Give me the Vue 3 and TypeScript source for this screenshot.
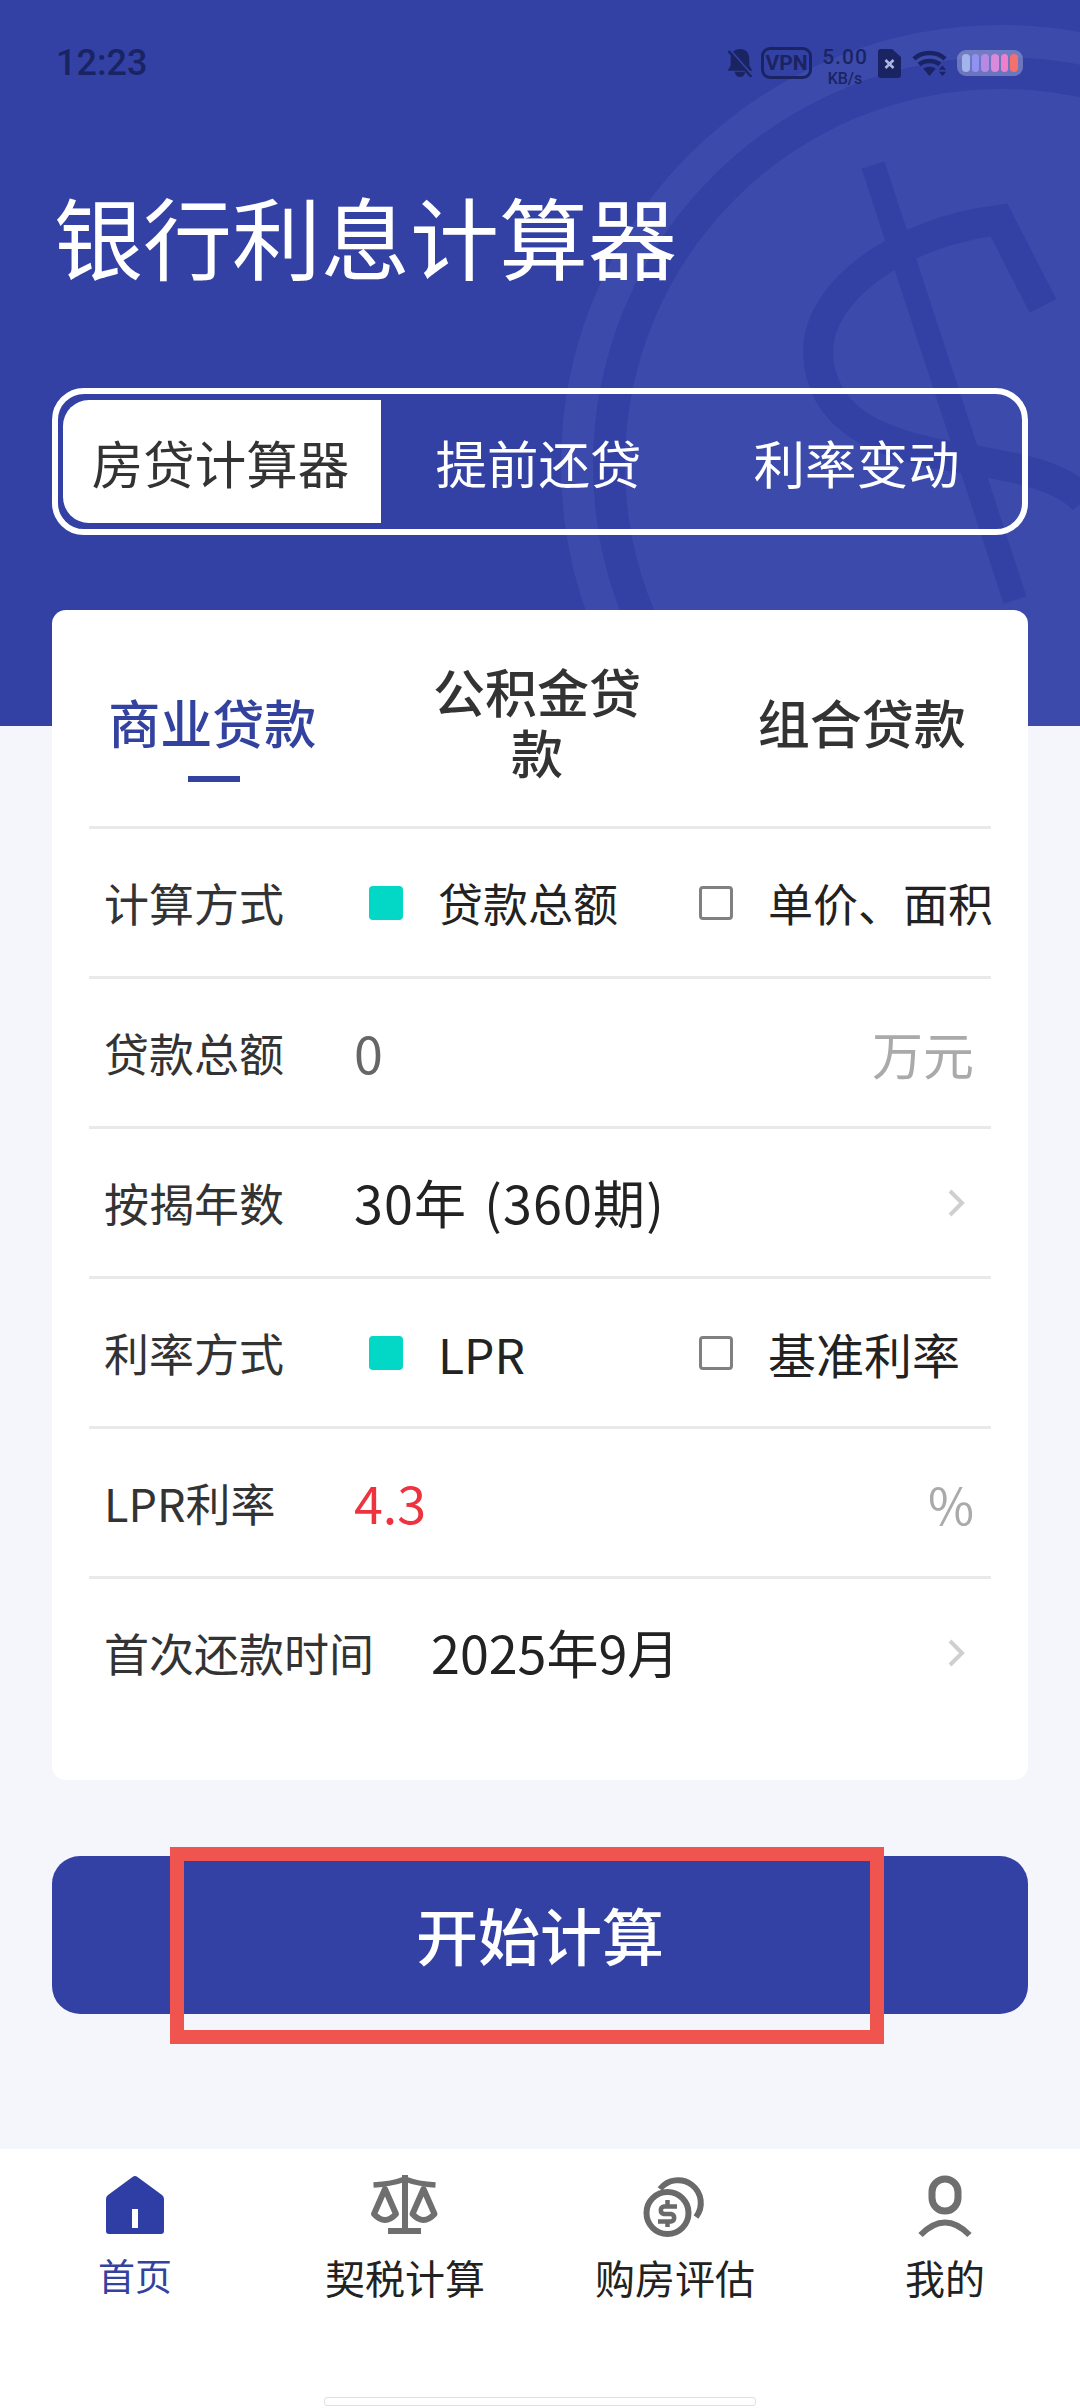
<script setup lang="ts">
import { ref } from 'vue'

const topTabs = ['房贷计算器', '提前还贷', '利率变动']
const loanTabs = ['商业贷款', '公积金贷款', '组合贷款']
const navItems = [
  { key: 'home', label: '首页' },
  { key: 'scale', label: '契税计算' },
  { key: 'coin', label: '购房评估' },
  { key: 'user', label: '我的' },
]
const batteryBars = ['#a3b4ec', '#9092f2', '#b68ae4', '#d98adb', '#ee7fca', '#f3706f']

const activeTop = ref(0)
const activeLoan = ref(0)
const activeNav = ref(0)
const calcMode = ref(0)
const rateMode = ref(0)
</script>

<template>
  <div class="page">
    <section class="hero">
      <svg class="hero-bg" width="1080" height="726" viewBox="0 0 1080 726" fill="none">
        <circle cx="1001" cy="465" r="424" stroke="#3c4bab" stroke-width="32" />
        <circle cx="1001" cy="465" r="376" fill="#3c4bab" />
        <path d="M873 165 L1015 600" stroke="#3341a5" stroke-width="24" />
        <path
          d="M1043 306 L999 220 C900 232 818 290 818 352 C820 420 880 444 950 456 C1010 466 1060 474 1084 500"
          stroke="#3341a5"
          stroke-width="30"
        />
      </svg>

      <div class="status">
        <span class="time">12:23</span>
        <div class="status-icons">
          <svg class="bell" width="26" height="28" viewBox="0 0 24 27">
            <path d="M12 0c6 0 9 4 9 10v6l3 5H0l3-5v-6c0-6 3-10 9-10zM7 22h10a5 5 0 0 1-10 0z" fill="#1b2462" />
            <path d="M1 0l22 25" stroke="#3341a5" stroke-width="3" />
            <path d="M1 2l22 25" stroke="#1b2462" stroke-width="2.500" />
          </svg>
          <span class="vpn">VPN</span>
          <span class="speed"><b>5.00</b><i>KB/s</i></span>
          <svg class="sim" width="23" height="29" viewBox="0 0 23 29">
            <path d="M3 0h11l9 8v18a3 3 0 0 1-3 3H3a3 3 0 0 1-3-3V3a3 3 0 0 1 3-3z" fill="#1b2462" />
            <path d="M7.500 11l8 8M15.500 11l-8 8" stroke="#aeb6e0" stroke-width="2.600" />
          </svg>
          <svg class="wifi" width="35" height="26" viewBox="0 0 33 25" fill="none">
            <path d="M1.500 8.500C9.500 1 23.500 1 31.500 8.500" stroke="#1b2462" stroke-width="4.400" />
            <path d="M6.500 14C12 9.500 21 9.500 26.500 14" stroke="#1b2462" stroke-width="4.400" />
            <path d="M10.500 18c3-2.500 9-2.500 12 0l-6 7z" fill="#1b2462" />
            <path d="M29 15l3.500 4h-7zM29 25l3.500-4h-7z" fill="#1b2462" />
          </svg>
          <div class="battery">
            <i v-for="c in batteryBars" :key="c" :style="{ background: c }" />
          </div>
        </div>
      </div>

      <h1 class="title">银行利息计算器</h1>

      <div class="seg">
        <button
          v-for="(t, i) in topTabs"
          :key="t"
          class="seg-item"
          :class="{ on: activeTop === i }"
          @click="activeTop = i"
        >
          {{ t }}
        </button>
      </div>
    </section>

    <main class="main">
      <section class="card">
        <div class="loan-tabs">
          <button
            v-for="(t, i) in loanTabs"
            :key="t"
            class="loan-tab"
            :class="{ on: activeLoan === i }"
            @click="activeLoan = i"
          >
            <span class="loan-text">{{ t }}</span>
            <i v-if="activeLoan === i" class="loan-bar" />
          </button>
        </div>

        <div class="row">
          <span class="label">计算方式</span>
          <div class="options">
            <label class="option" @click="calcMode = 0">
              <i class="check" :class="{ on: calcMode === 0 }" />贷款总额
            </label>
            <label class="option" @click="calcMode = 1">
              <i class="check" :class="{ on: calcMode === 1 }" />单价、面积
            </label>
          </div>
        </div>

        <div class="row">
          <span class="label">贷款总额</span>
          <span class="value muted">0</span>
          <span class="unit">万元</span>
        </div>

        <div class="row">
          <span class="label">按揭年数</span>
          <span class="value years">30年 (360期)</span>
          <svg class="chevron" width="17" height="28" viewBox="0 0 17 28" fill="none">
            <path d="M2 2l12 12L2 26" stroke="#cfcfcf" stroke-width="4" />
          </svg>
        </div>

        <div class="row">
          <span class="label">利率方式</span>
          <div class="options rate">
            <label class="option" @click="rateMode = 0">
              <i class="check" :class="{ on: rateMode === 0 }" />LPR
            </label>
            <label class="option" @click="rateMode = 1">
              <i class="check" :class="{ on: rateMode === 1 }" />基准利率
            </label>
          </div>
        </div>

        <div class="row">
          <span class="label">LPR利率</span>
          <span class="value red">4.3</span>
          <span class="unit percent">%</span>
        </div>

        <div class="row">
          <span class="label">首次还款时间</span>
          <span class="value">2025年9月</span>
          <svg class="chevron" width="17" height="28" viewBox="0 0 17 28" fill="none">
            <path d="M2 2l12 12L2 26" stroke="#cfcfcf" stroke-width="4" />
          </svg>
        </div>
      </section>

      <div class="action">
        <button class="start">开始计算</button>
        <div class="mark" />
      </div>
    </main>

    <nav class="nav">
      <div class="nav-items">
        <button
          v-for="(n, i) in navItems"
          :key="n.key"
          class="nav-item"
          :class="{ on: activeNav === i }"
          @click="activeNav = i"
        >
          <svg width="70" height="70" viewBox="0 0 70 70" fill="none">
            <template v-if="n.key === 'home'">
              <path
                d="M32.500 7 L8 25 Q6 26.500 6 29 V61 Q6 64 9 64 H61 Q64 64 64 61 V29 Q64 26.500 62 25 L37.500 7 Q35 5 32.500 7z"
                fill="#2f3ea5"
              />
              <rect x="32" y="39" width="6" height="19" fill="#fff" />
            </template>
            <template v-else-if="n.key === 'scale'">
              <g stroke="#6f6f6f" stroke-width="6">
                <path d="M35 5V59M18 61H51" />
                <path d="M3.500 15Q22 14 35 9Q48 14 65.500 15" stroke-width="5.500" />
                <path d="M15 19L4 44Q15 56 26 44z" stroke-linejoin="round" />
                <path d="M53.500 19L42.500 44Q53.500 56 64.500 44z" stroke-linejoin="round" />
              </g>
            </template>
            <template v-else-if="n.key === 'coin'">
              <g stroke="#6a6a6a" stroke-width="6">
                <circle cx="27.500" cy="43" r="21" />
                <path d="M20 19A22.500 22.500 0 1 1 56 47" />
                <path
                  d="M37 36.500H24a3.800 3.800 0 0 0 0 7.500h7a3.800 3.800 0 0 1 0 7.500H18M27.500 30V36M27.500 52V57"
                  stroke-width="4.500"
                />
              </g>
            </template>
            <template v-else>
              <g stroke="#6f6f6f">
                <rect x="22" y="9" width="26" height="32" rx="13" stroke-width="7" />
                <path d="M10.500 65Q35 40 59.500 65" stroke-width="6" />
              </g>
            </template>
          </svg>
          <span class="nav-label">{{ n.label }}</span>
        </button>
      </div>
      <i class="home-bar" />
    </nav>
  </div>
</template>

<style>
html,
body {
  margin: 0;
  background: #f4f6fb;
}
</style>

<style scoped>
.page {
  width: 1080px;
  height: 2408px;
  display: flex;
  flex-direction: column;
  overflow: hidden;
  background: #f4f6fb;
  font-family: "Noto Sans CJK SC", "Noto Sans", sans-serif;
  color: #333;
}

button {
  border: 0;
  padding: 0;
  background: none;
  font: inherit;
  color: inherit;
}

.hero {
  position: relative;
  flex: none;
  height: 726px;
  background: #3341a5;
  overflow: hidden;
}

.hero-bg {
  position: absolute;
  left: 0;
  top: 0;
}

.status {
  position: relative;
  height: 46px;
  padding: 40px 57px 0 56px;
  display: flex;
  align-items: center;
  justify-content: space-between;
  color: #1b2462;
}

.time {
  font-family: Roboto, sans-serif;
  font-weight: 500;
  font-size: 36px;
}

.status-icons {
  display: flex;
  align-items: center;
}

.bell {
  margin-right: 8px;
}

.vpn {
  box-sizing: border-box;
  width: 51px;
  height: 32px;
  border: 3px solid #1b2462;
  border-radius: 9px;
  font: 700 21px/26px Roboto, sans-serif;
  text-align: center;
}

.speed {
  width: 44px;
  margin: 0 11px;
  padding-top: 6px;
  display: flex;
  flex-direction: column;
  align-items: center;
  font-family: Roboto, sans-serif;
}

.speed b {
  font-weight: 500;
  font-size: 21px;
  line-height: 24px;
  letter-spacing: 1px;
}

.speed i {
  font-style: normal;
  font-weight: 500;
  font-size: 16px;
  line-height: 19px;
}

.sim {
  margin-right: 11px;
}

.wifi {
  margin-right: 10px;
}

.battery {
  box-sizing: border-box;
  width: 66px;
  height: 26px;
  padding: 4px 5px;
  display: flex;
  gap: 2px;
  border-radius: 9px;
  background: rgba(200, 205, 235, 0.38);
}

.battery i {
  flex: 1;
  border-radius: 4px;
}

.title {
  position: relative;
  margin: 99px 0 0 54px;
  font-size: 89px;
  line-height: 100px;
  font-weight: 400;
  color: #fff;
  white-space: nowrap;
}

.seg {
  position: relative;
  box-sizing: border-box;
  width: 976px;
  height: 147px;
  margin: 103px 0 0 52px;
  padding: 6px 5px;
  display: flex;
  border: 6px solid #fff;
  border-radius: 32px;
}

.seg-item {
  flex: 0 0 318px;
  padding-right: 3px;
  font-size: 51.500px;
  color: #fff;
}

.seg-item.on {
  background: #fff;
  color: #333;
  border-radius: 26px 0 0 26px;
}

.main {
  flex: 1;
  min-height: 0;
}

.card {
  position: relative;
  margin: -116px 52px 0;
  height: 1170px;
  border-radius: 14px;
  background: #fff;
  padding: 0 37px;
  box-sizing: border-box;
}

.loan-tabs {
  height: 216px;
  margin: 0 -35px 0 -39px;
  padding-right: 2px;
  display: flex;
  align-items: center;
}

.loan-tab {
  position: relative;
  flex: 1;
  height: 100%;
  padding: 6px 55px 0;
  font-size: 52px;
  font-weight: 500;
  line-height: 61px;
  color: #333;
}

.loan-text {
  display: block;
}

.loan-tab.on {
  color: #33429f;
}

.loan-bar {
  position: absolute;
  left: 50%;
  top: 166px;
  width: 52px;
  height: 6px;
  margin-left: -24px;
  background: #33429f;
}

.row {
  box-sizing: border-box;
  height: 150px;
  padding: 0 17px 0 15px;
  display: flex;
  align-items: center;
  border-top: 3px solid #e8e9eb;
}

.label {
  box-sizing: border-box;
  flex: none;
  min-width: 252px;
  padding-right: 59px;
  font-size: 45px;
  color: #333;
  white-space: nowrap;
}

.options {
  display: flex;
  margin-left: 13px;
}

.option {
  flex: 0 0 330px;
  display: flex;
  align-items: center;
  font-size: 45px;
  color: #222;
  white-space: nowrap;
}

.rate .option {
  font-size: 48px;
}

.check {
  box-sizing: border-box;
  flex: none;
  width: 34px;
  height: 34px;
  margin-right: 35px;
  border: 3px solid #808080;
  border-radius: 4px;
}

.check.on {
  border-color: #03d8c6;
  background: #03d8c6;
}

.value {
  flex: 1;
  margin-left: -2px;
  padding-bottom: 2px;
  font-size: 52px;
  line-height: 60px;
  color: #222;
  white-space: nowrap;
}

.years {
  letter-spacing: 1.200px;
  word-spacing: 4px;
}

.muted {
  color: #666;
}

.red {
  color: #ee3340;
}

.unit {
  font-size: 51px;
  color: #aaa;
}

.percent {
  font-size: 50px;
}

.chevron {
  margin-right: 9px;
}

.action {
  position: relative;
  margin: 76px 52px 0;
}

.start {
  display: block;
  width: 100%;
  height: 158px;
  padding-bottom: 2px;
  border-radius: 28px;
  background: #3341a5;
  font-size: 62px;
  font-weight: 500;
  color: #fff;
}

.mark {
  position: absolute;
  left: 118px;
  top: -9px;
  box-sizing: border-box;
  width: 714px;
  height: 197px;
  border: 14px solid #f0544f;
  pointer-events: none;
}

.nav {
  flex: none;
  height: 259px;
  display: flex;
  flex-direction: column;
  background: #fff;
}

.nav-items {
  display: flex;
  padding-top: 21px;
}

.nav-item {
  flex: 1;
  display: flex;
  flex-direction: column;
  align-items: center;
  color: #222;
  font-size: 40px;
}

.nav-item.on {
  color: #33429f;
}

.nav-item.on .nav-label {
  font-size: 37px;
  margin-top: 5px;
}

.nav-label {
  height: 60px;
  line-height: 60px;
  margin-top: 7px;
}

.home-bar {
  box-sizing: border-box;
  align-self: center;
  width: 432px;
  height: 9px;
  margin-top: auto;
  margin-bottom: 2px;
  border: 1px solid #e0e0e0;
  border-radius: 3px;
  background: #fff;
}
</style>
